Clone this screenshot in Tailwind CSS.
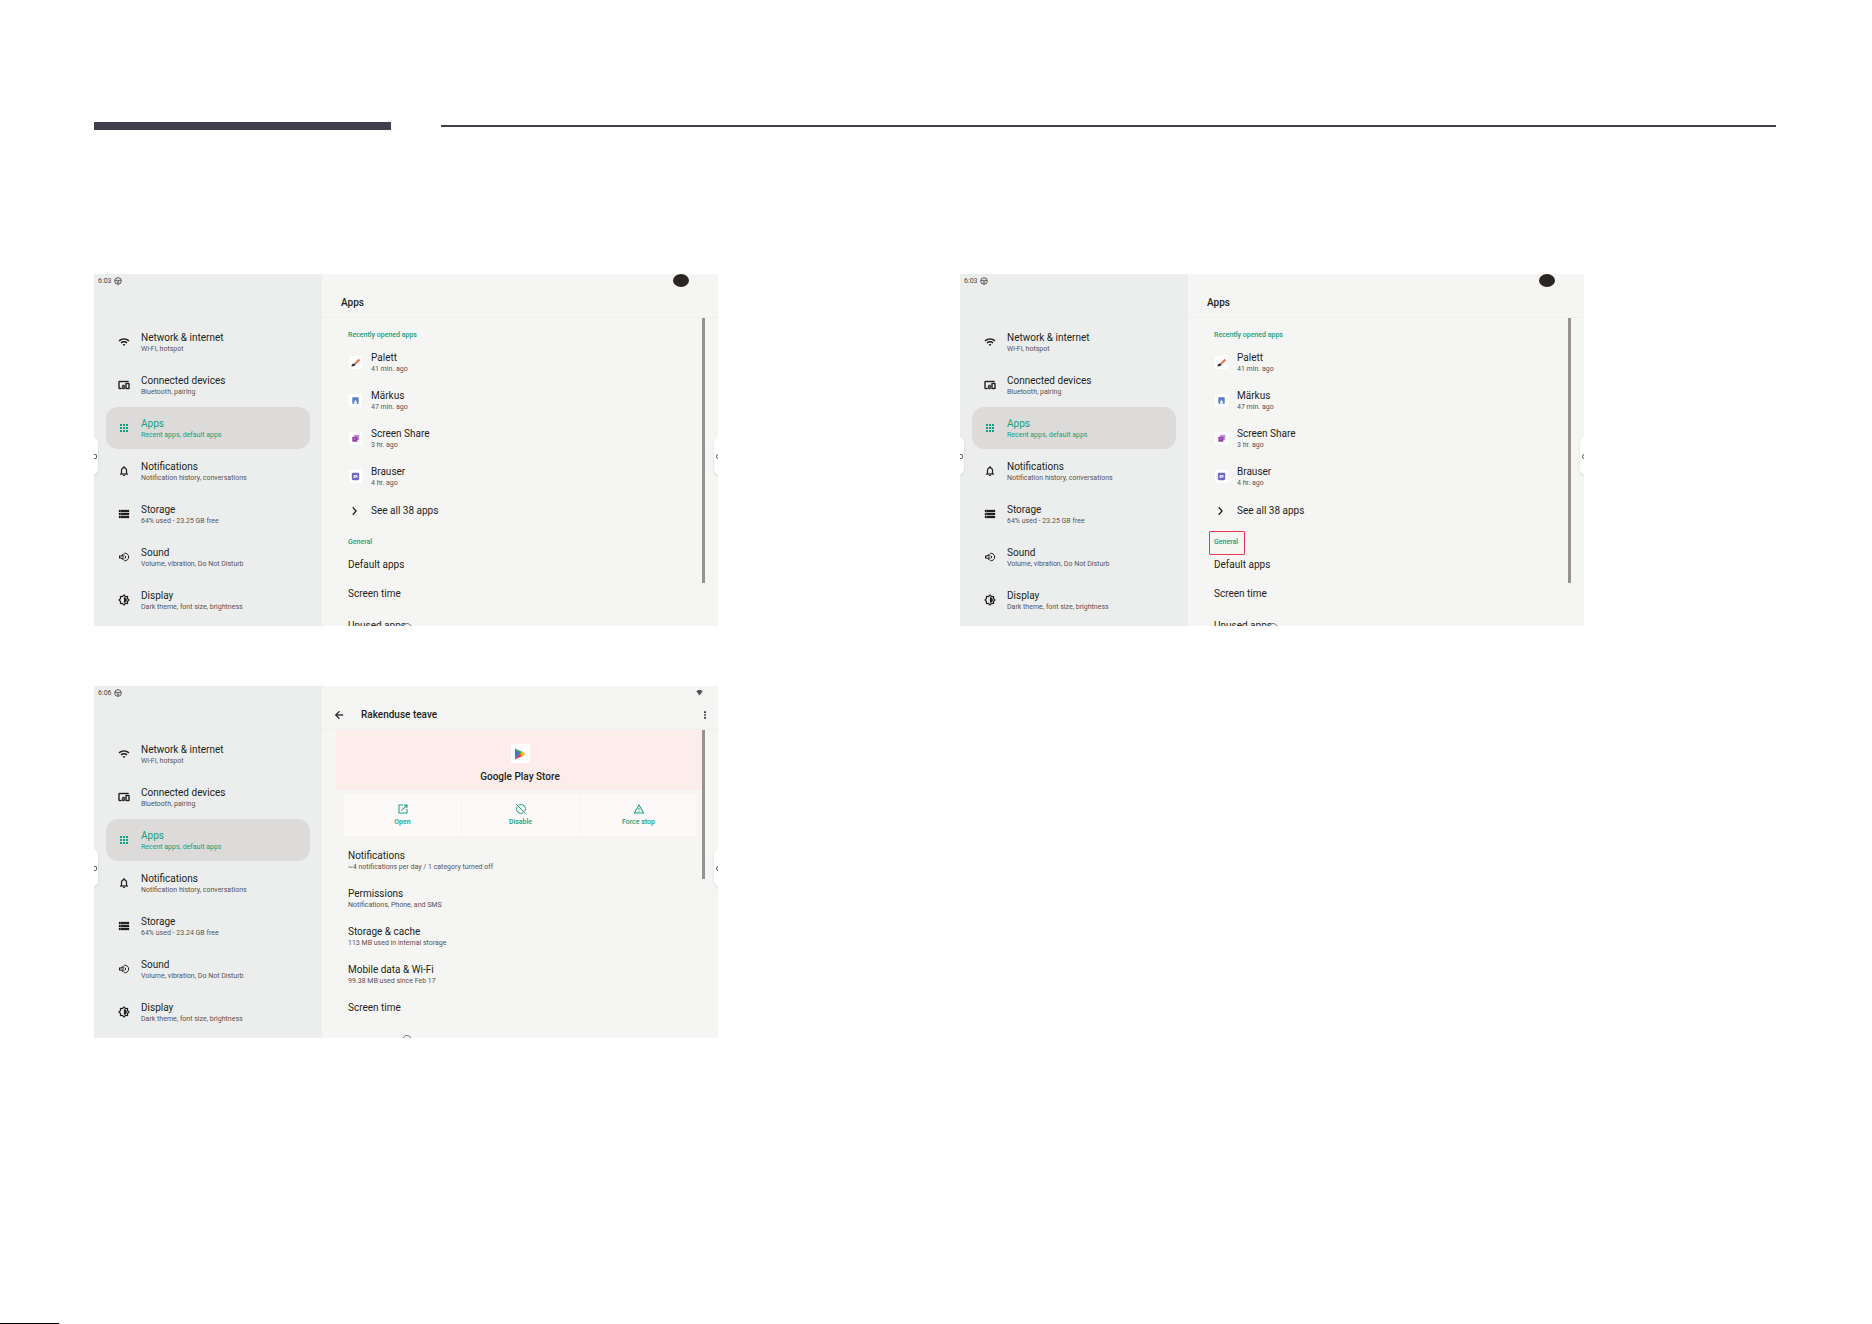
<!DOCTYPE html>
<html lang="et">
<head>
    <meta charset="UTF-8">
    <meta name="viewport" content="width=device-width, initial-scale=1.0">
    <title>Apps</title>
    <script src="https://cdn.jsdelivr.net/npm/@tailwindcss/browser@4"></script>
</head>
<body class="bg-white font-[Roboto,sans-serif] text-[#231f20]">

    <!-- Icon sprite -->
    <svg class="hidden" aria-hidden="true">
        <symbol id="wifi" viewBox="0 0 24 24"><path d="M1 9l2 2c4.970-4.970 13.030-4.970 18 0l2-2C16.930 2.930 7.080 2.930 1 9zm8 8l3 3 3-3c-1.650-1.660-4.340-1.660-6 0zm-4-4l2 2c2.760-2.760 7.240-2.760 10 0l2-2C15.140 9.140 8.870 9.140 5 13z"/></symbol>
        <symbol id="devices" viewBox="0 0 24 24"><path stroke="currentColor" stroke-width=".8" d="M3 6h18V4H3c-1.100 0-2 .9-2 2v12c0 1.100.9 2 2 2h4v-2H3V6zm10 6H9v1.780c-.61.550-1 1.330-1 2.220s.39 1.670 1 2.220V20h4v-1.780c.61-.550 1-1.340 1-2.220s-.39-1.670-1-2.220V12zm-2 5.500c-.83 0-1.500-.67-1.500-1.500s.67-1.500 1.500-1.500 1.500.67 1.500 1.500-.67 1.500-1.500 1.500zM22 8h-6c-.5 0-1 .5-1 1v10c0 .5.5 1 1 1h6c.5 0 1-.5 1-1V9c0-.5-.5-1-1-1zm-1 10h-4v-8h4v8z"/></symbol>
        <symbol id="apps" viewBox="0 0 24 24"><path d="M4 8h4V4H4v4zm6 12h4v-4h-4v4zm-6 0h4v-4H4v4zm0-6h4v-4H4v4zm6 0h4v-4h-4v4zm6-10v4h4V4h-4zm-6 4h4V4h-4v4zm6 6h4v-4h-4v4zm0 6h4v-4h-4v4z"/></symbol>
        <symbol id="bell" viewBox="0 0 24 24"><path stroke="currentColor" stroke-width=".5" d="M12 22c1.100 0 2-.9 2-2h-4c0 1.100.9 2 2 2zm6-6v-5c0-3.070-1.630-5.640-4.500-6.320V4c0-.83-.67-1.500-1.500-1.500s-1.500.67-1.500 1.500v.68C7.640 5.360 6 7.920 6 11v5l-2 2v1h16v-1l-2-2zm-2 1H8v-6c0-2.480 1.510-4.500 4-4.500s4 2.020 4 4.500v6z"/></symbol>
        <symbol id="storage" viewBox="0 0 24 24"><path stroke="currentColor" stroke-width=".6" d="M2 20h20v-4H2v4zm2-3h2v2H4v-2zM2 4v4h20V4H2zm4 3H4V5h2v2zm-4 7h20v-4H2v4zm2-3h2v2H4v-2z"/></symbol>
        <symbol id="sound" viewBox="0 0 24 24"><path d="M2 9v6h4l5 4V5L6 9H2zm7 .2v5.600L6.800 13H4v-2h2.800L9 9.200z"/><path d="M13 8.500a4 4 0 0 1 0 7M12.500 4.500a7.600 7.600 0 1 1 0 15" fill="none" stroke="currentColor" stroke-width="2"/></symbol>
        <symbol id="display" viewBox="0 0 24 24"><path stroke="currentColor" stroke-width=".5" d="M20 8.690V4h-4.690L12 .69 8.690 4H4v4.690L.69 12 4 15.310V20h4.690L12 23.310 15.310 20H20v-4.690L23.310 12 20 8.690zm-2 5.790V18h-3.520L12 20.480 9.520 18H6v-3.520L3.520 12 6 9.520V6h3.520L12 3.520 14.480 6H18v3.520L20.480 12 18 14.480zM12 6.500v11c3.030 0 5.500-2.470 5.500-5.500S15.030 6.500 12 6.500z"/></symbol>
        <symbol id="palett" viewBox="0 0 24 24"><path d="M9 14L19 4l3 3-10 10z" fill="#ef6a3a"/><path d="M2 20c2-1 2-6 7-6l3 3c-1 3-6 4-10 3z" fill="#333"/></symbol>
        <symbol id="markus" viewBox="0 0 24 24"><rect x="5" y="5" width="14" height="14" rx="1" fill="#5b7fc7"/><path d="M9 19v-5l3-3 3 3v5z" fill="#e9f0ff"/></symbol>
        <symbol id="share" viewBox="0 0 24 24"><rect x="9" y="4" width="11" height="11" rx="1" fill="#c48bd0"/><rect x="5" y="8" width="11" height="11" rx="1" fill="#9440a8"/><path d="M9 15c0-3 2-4 4-4" stroke="#d9a9e2" stroke-width="1.5" fill="none"/></symbol>
        <symbol id="brauser" viewBox="0 0 24 24"><rect x="4" y="4" width="16" height="16" rx="3" fill="#6a68c4"/><path d="M8 9h8v6H8z" fill="#fff"/><path d="M10 11l5 4" stroke="#6a68c4" stroke-width="2"/></symbol>
        <symbol id="chevron" viewBox="0 0 24 24"><path d="M9 3l8 9-8 9" fill="none" stroke="currentColor" stroke-width="3"/></symbol>
        <symbol id="back" viewBox="0 0 24 24"><path d="M20 11H7.830l5.590-5.590L12 4l-8 8 8 8 1.410-1.410L7.830 13H20v-2z" stroke="currentColor" stroke-width=".6"/></symbol>
        <symbol id="more" viewBox="0 0 24 24"><path d="M10 3h4v4h-4zM10 10h4v4h-4zM10 17h4v4h-4z"/></symbol>
        <symbol id="wheel" viewBox="0 0 24 24"><g fill="none" stroke="currentColor" stroke-width="2.600"><circle cx="12" cy="12" r="10"/><path d="M3 10h18M8 15h8M12 15v7"/></g></symbol>
        <symbol id="signal" viewBox="0 0 24 24"><path d="M1 8C7 2 17 2 23 8L12 22z"/></symbol>
        <symbol id="open" viewBox="0 0 24 24"><path d="M19 19H5V5h7V3H3v18h18v-9h-2v7zM14 3v2h3.590l-9.830 9.830 1.410 1.410L19 6.410V10h2V3h-7z"/></symbol>
        <symbol id="disable" viewBox="0 0 24 24"><g fill="none" stroke="currentColor" stroke-width="2"><path d="M7.500 4.200a9 9 0 0 1 12.300 12.300M16.500 19.800A9 9 0 0 1 4.200 7.500M2.500 2.500l19 19"/></g></symbol>
        <symbol id="warning" viewBox="0 0 24 24"><path d="M12 5.990L19.530 19H4.470L12 5.990M12 2L1 21h22L12 2zm1 14h-2v2h2v-2zm0-6h-2v4h2v-4z"/></symbol>
        <symbol id="play" viewBox="0 0 24 24"><path d="M2 1l11 11L2 23z" fill="#4a6fd0"/><path d="M2 1l15 7-4 5z" fill="#2fa45c"/><path d="M2 23l15-7-4-5z" fill="#ea3b3f"/><path d="M16.500 7L23 12l-6.500 5L12 12z" fill="#f9b51c"/></symbol>
    </svg>

    <div class="min-h-screen flex flex-col pt-[122px]">
        <header class="flex items-center gap-[50px] pl-[94px] pr-24">
            <div class="h-2 w-[297px] bg-[#403d4c]"></div>
            <div class="h-[2px] flex-1 bg-[#403d4c]"></div>
        </header>

        <main class="mt-36 grid grid-cols-2 gap-x-[50px] gap-y-[60px] pl-[94px] pr-24">
            <section data-screen="apps" data-time="6:03"></section>
            <section data-screen="apps" data-time="6:03" data-marked></section>
            <section data-screen="info" data-time="6:06"></section>
        </main>

        <footer class="mt-auto h-px w-[59px] bg-black"></footer>
    </div>

    <script>
        const icon = (id, cls) => `<svg class="${cls} shrink-0 fill-current" aria-hidden="true"><use href="#${id}"/></svg>`;

        const menu = (free) => [
            ['wifi', 'Network &amp; internet', 'Wi-Fi, hotspot'],
            ['devices', 'Connected devices', 'Bluetooth, pairing'],
            ['apps', 'Apps', 'Recent apps, default apps'],
            ['bell', 'Notifications', 'Notification history, conversations'],
            ['storage', 'Storage', `64% used - ${free} GB free`],
            ['sound', 'Sound', 'Volume, vibration, Do Not Disturb'],
            ['display', 'Display', 'Dark theme, font size, brightness'],
        ];

        const recent = [
            ['palett', 'Palett', '41 min. ago'],
            ['markus', 'Märkus', '47 min. ago'],
            ['share', 'Screen Share', '3 hr. ago'],
            ['brauser', 'Brauser', '4 hr. ago'],
        ];

        const details = [
            ['Notifications', '~4 notifications per day / 1 category turned off'],
            ['Permissions', 'Notifications, Phone, and SMS'],
            ['Storage &amp; cache', '113 MB used in internal storage'],
            ['Mobile data &amp; Wi-Fi', '99.38 MB used since Feb 17'],
        ];

        // Title with a smaller line under it
        const lines = (title, sub, subColor) => `
            <span class="block">
                <span class="block text-[10px] leading-3">${title}</span>
                <span class="block text-[7px] leading-[10px] ${subColor}">${sub}</span>
            </span>`;

        const sidebar = (time, free) => `
            <nav class="w-[228px] shrink-0 bg-[#eceeed]">
                <div class="flex h-[47px] items-start gap-[2px] pl-1 pt-[2px] text-[7px] leading-[10px] text-[#4b4646]">${time} ${icon('wheel', 'size-2 mt-px')}</div>
                <ul class="px-3">
                    ${menu(free).map(([id, title, sub]) => `
                    <li class="pb-px"><a href="#" class="flex h-[42px] items-start gap-[11px] rounded-xl pl-3 pt-[11px] ${id === 'apps' ? 'bg-[#dcdbda] text-[#12a180]' : ''}">
                        ${icon(id, 'size-3 mt-1')}${lines(title, sub, id === 'apps' ? '' : 'text-[#5b5252]')}
                    </a></li>`).join('')}
                </ul>
            </nav>`;

        const appsPane = (marked) => `
            <div class="flex h-11 items-end border-b border-[#efefed] pl-[19px] pb-[6px]">
                <h2 class="text-[10px] leading-4 font-medium">Apps</h2>
                <span class="absolute right-[29px] top-0 h-[13px] w-4 rounded-[50%] bg-[#2b2523]"></span>
            </div>
            <div class="pl-[26px] pt-3">
                <h3 class="text-[7px] leading-[10px] font-medium text-[#12a180]">Recently opened apps</h3>
                <ul class="pt-3">
                    ${recent.map(([id, title, sub]) => `
                    <li><a href="#" class="flex h-[38px] items-start gap-[9px] pl-px">
                        <span class="mt-1 flex size-[13px] items-center justify-center rounded-xs bg-white">${icon(id, 'size-[11px]')}</span>
                        ${lines(title, sub, 'text-[#5b5252]')}
                    </a></li>`).join('')}
                </ul>
                <a href="#" class="flex items-center gap-3 pt-px pl-px text-[10px] leading-3">${icon('chevron', 'size-[10px]')}See all 38 apps</a>
                <h3 class="relative mt-5 text-[7px] leading-[10px] font-medium text-[#12a180]">General
                    ${marked ? '<span class="absolute -left-[5px] -top-[6px] h-6 w-9 rounded-[1px] border border-[#ea3a52]"></span>' : ''}
                </h3>
                <ul class="flex flex-col gap-[17px] pt-3 text-[10px] leading-3">
                    <li><a href="#">Default apps</a></li>
                    <li><a href="#">Screen time</a></li>
                    <li class="pt-[3px]"><a href="#">Unused apps</a></li>
                </ul>
            </div>
            <span class="absolute left-20 top-[349px] size-[10px] rounded-full border border-[#777]"></span>
            <div class="absolute right-[13px] top-11 h-[265px] w-[3px] bg-[#989290]"></div>`;

        const infoPane = () => `
            <div class="flex h-11 items-end border-b border-[#efefed] pl-[11px] pr-2 pb-[6px]">
                <button class="mb-[2px]" aria-label="Back">${icon('back', 'block size-3')}</button>
                <h2 class="flex-1 pl-4 text-[10px] leading-4 font-medium">Rakenduse teave</h2>
                <button class="mb-[3px]" aria-label="More">${icon('more', 'block size-[10px]')}</button>
                <span class="absolute right-[15px] top-[3px] text-[#555]">${icon('signal', 'block size-[7px]')}</span>
            </div>
            <div class="mr-[14px] ml-[14px] flex h-[60px] flex-col items-center bg-[#fcedea] pt-[14px]">
                <span class="flex size-[19px] items-center justify-center rounded-xs bg-white">${icon('play', 'size-3')}</span>
                <h3 class="pt-2 text-[10px] leading-3 font-medium">Google Play Store</h3>
            </div>
            <div class="mt-1 mr-[21px] ml-[22px] grid h-[42px] grid-cols-3 gap-px text-[7px] leading-[10px] font-medium text-[#12a180]">
                ${[['open', 'Open'], ['disable', 'Disable'], ['warning', 'Force stop']].map(([id, label]) => `
                <button class="flex flex-col items-center gap-[2px] bg-[#fdf9f8] pt-[9px]">${icon(id, 'size-3')}${label}</button>`).join('')}
            </div>
            <ul class="pt-[14px] pl-[26px]">
                ${details.map(([title, sub]) => `<li class="h-[38px]"><a href="#">${lines(title, sub, 'text-[#5b5252]')}</a></li>`).join('')}
                <li class="text-[10px] leading-3"><a href="#">Screen time</a></li>
            </ul>
            <span class="absolute left-20 top-[349px] size-[10px] rounded-full border border-[#777]"></span>
            <div class="absolute right-[13px] top-11 h-[149px] w-[3px] bg-[#989290]"></div>`;

        document.querySelectorAll('[data-screen]').forEach((el) => {
            const info = el.dataset.screen === 'info';
            el.className = 'relative flex h-[352px] w-full max-w-[624px] overflow-hidden bg-[#f5f5f4]';
            el.innerHTML = `
                ${sidebar(el.dataset.time, info ? '23.24' : '23.25')}
                <div class="relative flex-1">${info ? infoPane() : appsPane('marked' in el.dataset)}</div>
                <span class="absolute -left-2 top-[163px] flex h-[38px] w-3 items-center justify-end rounded-md bg-white pr-[1px] shadow-sm"><span class="h-[5px] w-[3px] rounded-r-xs border border-l-0 border-[#555]"></span></span>
                <span class="absolute -right-2 top-[163px] flex h-[38px] w-3 items-center rounded-md bg-white pl-[2px] shadow-sm"><span class="size-[5px] rounded-full border border-[#555]"></span></span>`;
        });
    </script>

</body>
</html>
